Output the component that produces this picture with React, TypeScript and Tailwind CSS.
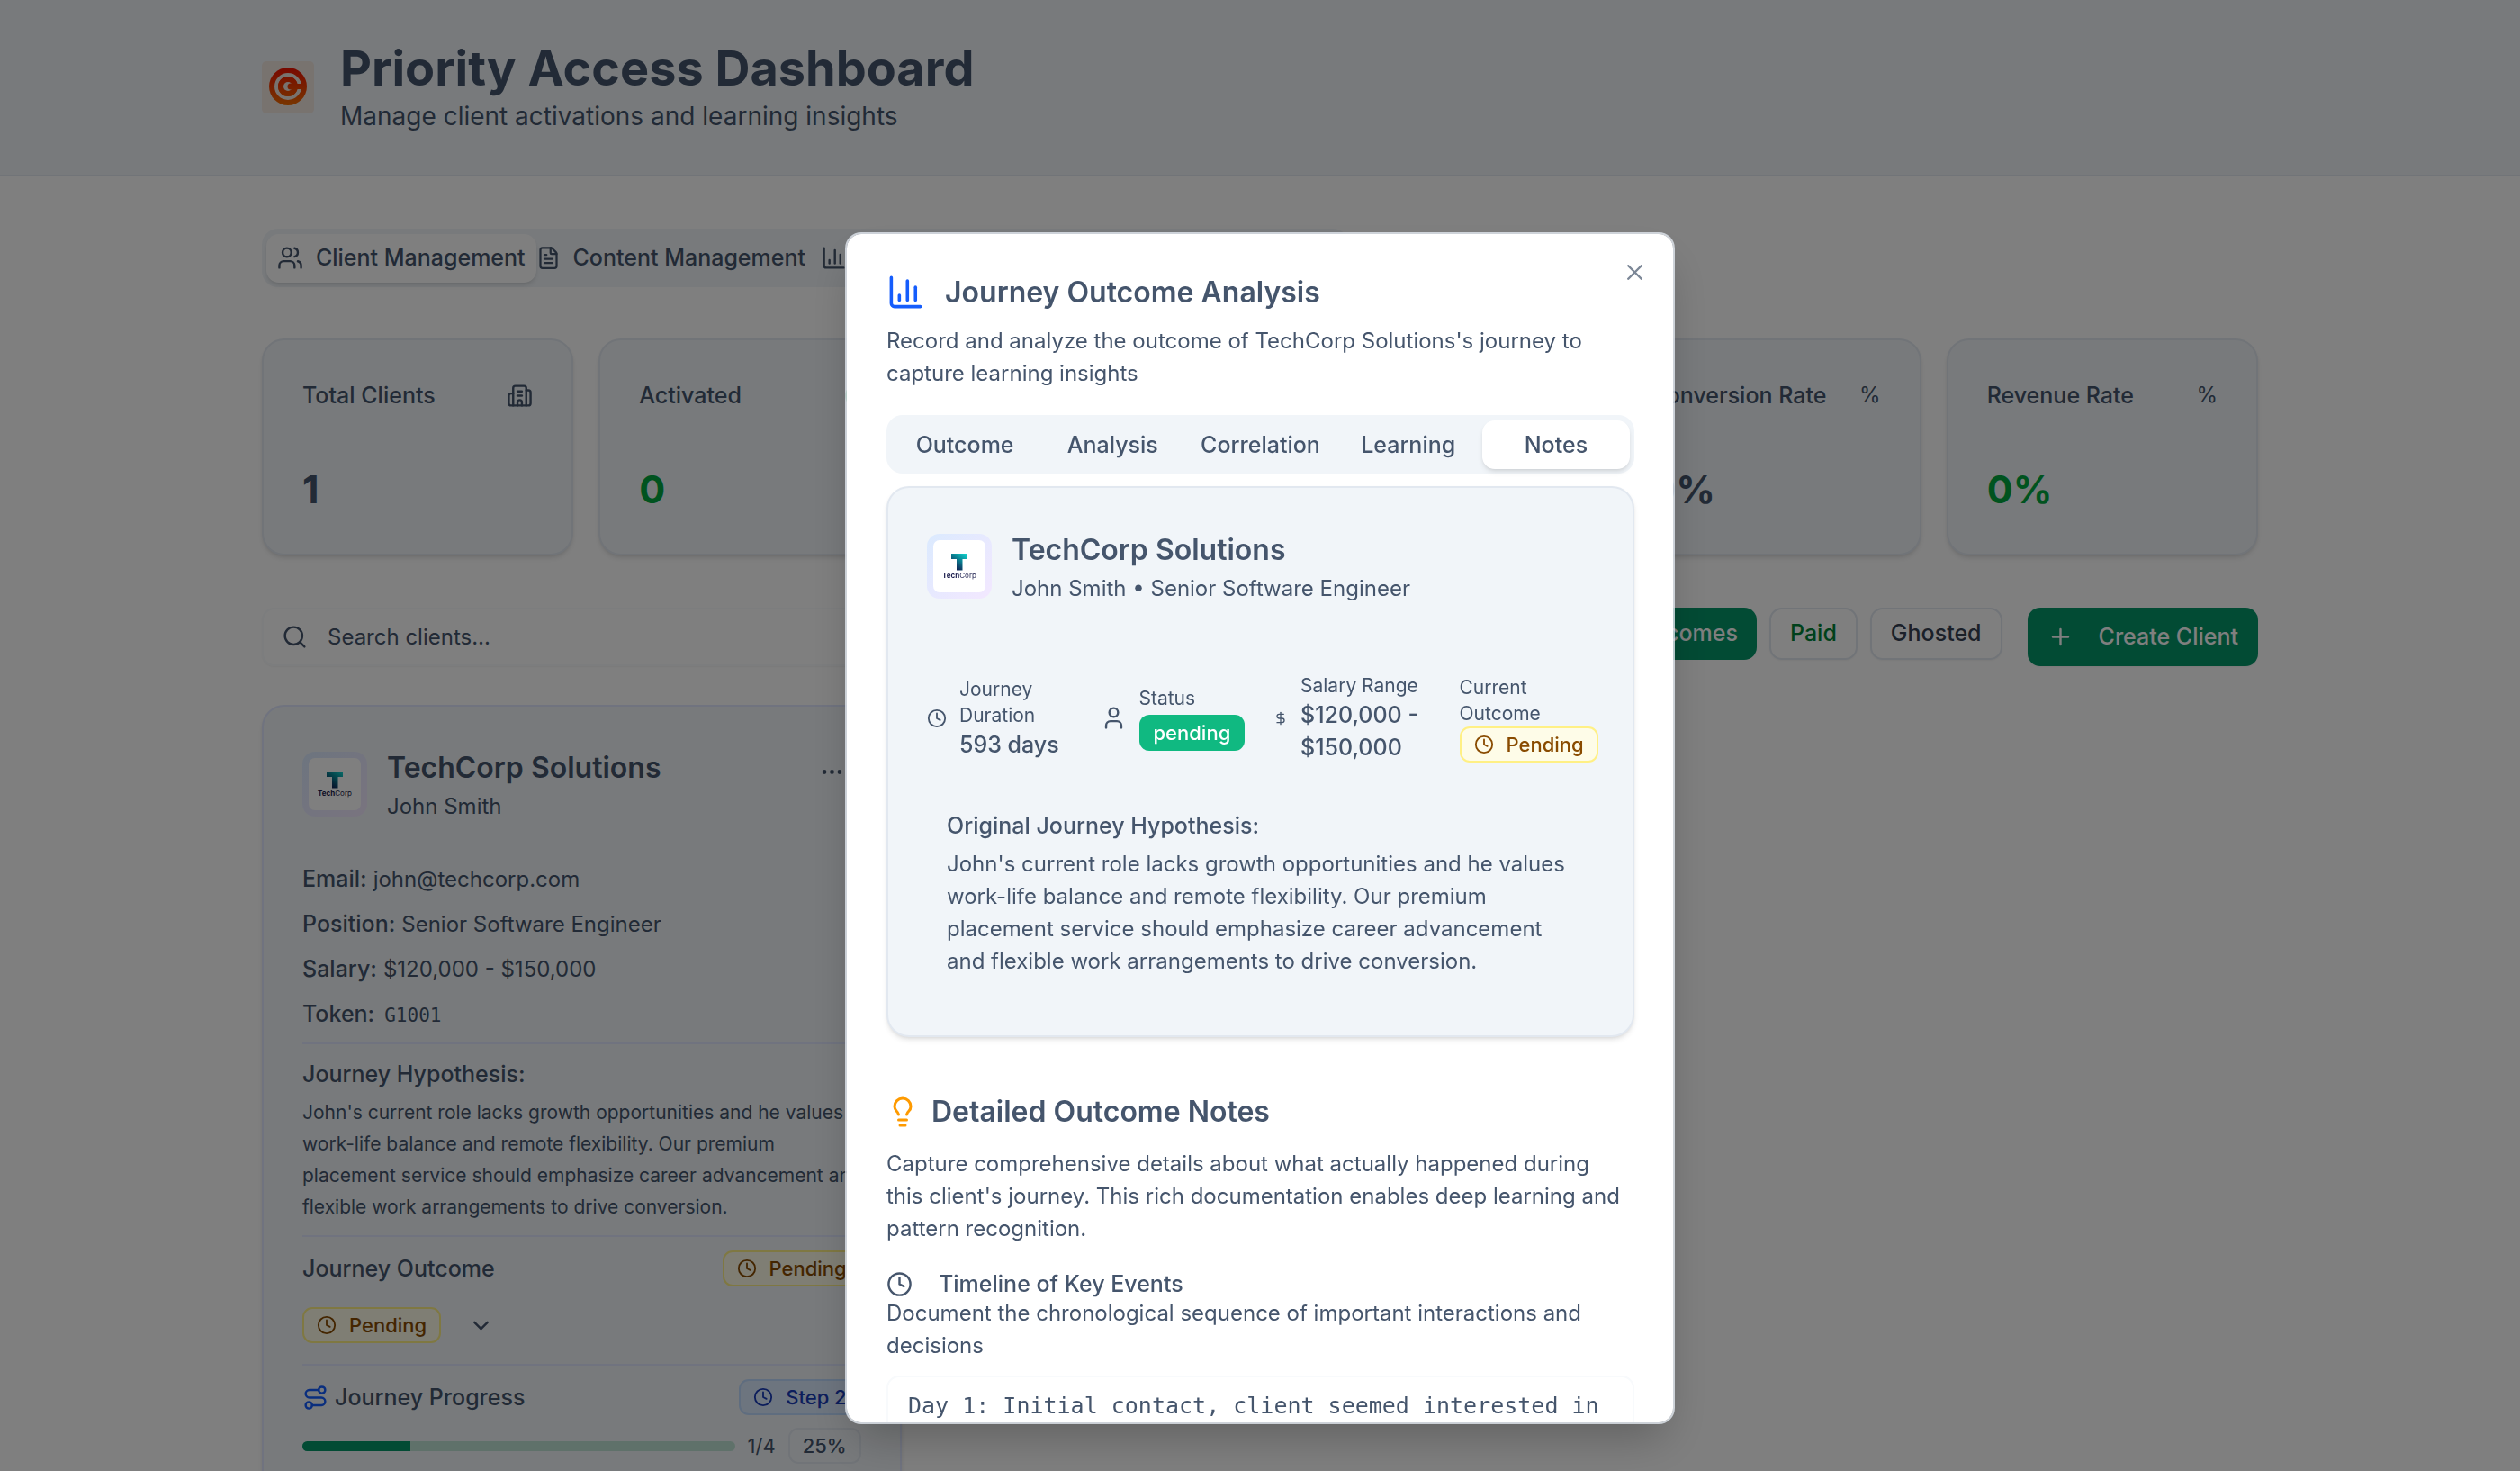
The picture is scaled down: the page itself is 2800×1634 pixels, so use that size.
import React from 'react';
import {
  Users, FileText, ChartColumn, Building2, CircleCheck, Search, Plus, Ellipsis, Clock,
  ChevronDown, Route, X, Lightbulb, User, DollarSign, Settings,
} from 'lucide-react';

const HYPOTHESIS = [
  "John's current role lacks growth opportunities and he values",
  'work-life balance and remote flexibility. Our premium',
  'placement service should emphasize career advancement and',
  'flexible work arrangements to drive conversion.',
];

function Brand() {
  return (
    <svg viewBox="0 0 58 58" className="size-[58px] shrink-0" aria-hidden="true">
      <defs>
        <linearGradient id="brand" gradientUnits="userSpaceOnUse" x1="0" y1="7" x2="0" y2="49">
          <stop offset="0" stopColor="#f01000" />
          <stop offset="1" stopColor="#f06c00" />
        </linearGradient>
      </defs>
      <rect width="58" height="58" rx="5" fill="#f1e6df" />
      <circle cx="29" cy="28" r="21" fill="url(#brand)" />
      <circle cx="29" cy="28" r="13" fill="none" stroke="#f1e6df" strokeWidth="4" />
      <rect x="39" y="22" width="5" height="12" fill="#f1e6df" />
      <circle cx="29" cy="28" r="11" fill="url(#brand)" />
      <rect x="31" y="25" width="15" height="6" fill="url(#brand)" />
      <circle cx="29" cy="28" r="5" fill="#f1e6df" />
      <circle cx="32" cy="28" r="3.500" fill="url(#brand)" />
    </svg>
  );
}

function CompanyLogo() {
  return (
    <div className="flex size-[72px] shrink-0 items-center justify-center rounded-[14px] bg-linear-to-br from-blue-100 to-purple-100">
      <svg viewBox="0 0 58 58" className="size-[58px]" role="img" aria-label="TechCorp">
        <defs>
          <linearGradient id="tee" x1="1" y1="0" x2="0.3" y2="1">
            <stop offset="0" stopColor="#14dcd4" />
            <stop offset="0.45" stopColor="#0a8796" />
            <stop offset="1" stopColor="#10184e" />
          </linearGradient>
        </defs>
        <rect width="58" height="58" rx="7" fill="#fff" />
        <path d="M20 15h18v6h-5.500v12.500h-6.500v-12.500h-6z" fill="url(#tee)" />
        <text x="29" y="42" textAnchor="middle" fontSize="8" fontFamily="Inter, sans-serif" fill="#1b1d4d">
          <tspan fontWeight="700">Tech</tspan>Corp
        </text>
      </svg>
    </div>
  );
}

function Badge({ tone, children }: { tone: 'yellow' | 'blue'; children: React.ReactNode }) {
  const tones = {
    yellow: 'border-yellow-200 bg-yellow-50 text-yellow-800',
    blue: 'border-blue-200 bg-blue-100 text-blue-800',
  };
  return (
    <span className={`inline-flex h-[40px] w-fit items-center gap-[14px] rounded-[11px] border-2 px-[14px] text-[22px] font-medium whitespace-nowrap ${tones[tone]}`}>
      <Clock className="size-[22px] shrink-0" />
      {children}
    </span>
  );
}

function Stat({ label, value, icon, green }: { label: string; value: string; icon: React.ReactNode; green?: boolean }) {
  return (
    <div className="flex flex-col gap-[57px] rounded-[25px] border-2 border-slate-200 bg-slate-100 p-[43px] shadow-md">
      <div className="flex items-center justify-between text-[25px] leading-[36px] whitespace-nowrap">
        <h3 className="font-medium">{label}</h3>
        {icon}
      </div>
      <p className={`text-[43px] leading-[58px] font-bold ${green ? 'text-green-600' : ''}`}>{value}</p>
    </div>
  );
}

function Field({ label, children }: { label: string; children: React.ReactNode }) {
  return (
    <p className="flex h-[36px] items-baseline gap-[7px] text-[24px]">
      <span className="text-[25px] font-medium">{label}</span>
      {children}
    </p>
  );
}

function Dashboard() {
  return (
    <div>
      <header className="border-b-2 border-slate-200 bg-slate-100 py-[43px]">
        <div className="mx-auto flex max-w-[2304px] items-center gap-[29px] px-[43px]">
          <Brand />
          <div>
            <h1 className="text-[54px] leading-[65px] font-bold">Priority Access Dashboard</h1>
            <p className="text-[28px] leading-[43px]">Manage client activations and learning insights</p>
          </div>
        </div>
      </header>
      <main className="mx-auto max-w-[2304px] px-[43px] pt-[58px]">
        <nav className="grid h-[65px] w-[1208px] grid-cols-4 items-center rounded-[18px] bg-slate-100 p-[5px] text-[25px] font-medium whitespace-nowrap">
          <button className="flex h-[54px] items-center justify-center gap-[14px] rounded-[14px] bg-white shadow-md"><Users className="size-[29px]" />Client Management</button>
          <button className="flex items-center justify-center gap-[14px]"><FileText className="size-[29px]" />Content Management</button>
          <button className="flex items-center justify-center gap-[14px]"><ChartColumn className="size-[29px]" />Learning Analytics</button>
          <button className="flex items-center justify-center gap-[14px]"><Settings className="size-[29px]" />Settings</button>
        </nav>

        <section className="mt-[57px] grid grid-cols-6 gap-[28px]">
          <Stat label="Total Clients" value="1" icon={<Building2 className="size-[29px]" />} />
          <Stat label="Activated" value="0" green icon={<CircleCheck className="size-[29px] text-green-600" />} />
          <Stat label="Pending" value="1" icon={<Clock className="size-[29px]" />} />
          <Stat label="Paid" value="0" icon={<DollarSign className="size-[29px]" />} />
          <Stat label="Conversion Rate" value="0%" icon={<span className="text-[24px]">%</span>} />
          <Stat label="Revenue Rate" value="0%" green icon={<span className="text-[24px]">%</span>} />
        </section>

        <section className="mt-[58px] flex items-start gap-[28px] text-[25px]">
          <div className="flex h-[65px] flex-1 items-center gap-[22px] rounded-[14px] border-2 border-slate-50 px-[20px] shadow-xs">
            <Search className="size-[29px] shrink-0" />
            <input aria-label="Search clients" className="w-full bg-transparent text-[24px] outline-none placeholder:text-slate-600 placeholder:opacity-100" placeholder="Search clients..." />
          </div>
          <div className="flex gap-[14px] font-medium text-gray-700">
            <button className="h-[58px] rounded-[14px] bg-[#059669] px-[21px] text-white">All Outcomes</button>
            <button className="h-[58px] rounded-[14px] border-2 border-slate-200 px-[21px] text-green-700 shadow-xs">Paid</button>
            <button className="h-[58px] rounded-[14px] border-2 border-slate-200 px-[21px] shadow-xs">Ghosted</button>
          </div>
          <button className="flex h-[65px] items-center gap-[28px] rounded-[14px] bg-[#059669] px-[22px] font-medium text-white shadow-xs">
            <Plus className="size-[29px]" />Create Client
          </button>
        </section>

        <section className="mt-[43px] grid grid-cols-3 gap-[43px]">
          <article className="rounded-[25px] border-2 border-indigo-100 bg-slate-100 p-[43px] text-[25px] leading-[36px] shadow-md">
            <div className="flex items-start justify-between">
              <div className="flex items-center gap-[22px]">
                <CompanyLogo />
                <div>
                  <h2 className="text-[32px] leading-[50px] font-semibold">TechCorp Solutions</h2>
                  <p className="text-[24px]">John Smith</p>
                </div>
              </div>
              <button aria-label="More actions" className="flex h-[58px] items-center px-[18px]"><Ellipsis className="size-[29px]" /></button>
            </div>
            <div className="mt-[44px] flex flex-col gap-[14px]">
              <Field label="Email:">john@techcorp.com</Field>
              <Field label="Position:">Senior Software Engineer</Field>
              <Field label="Salary:">$120,000 - $150,000</Field>
              <Field label="Token:"><code className="px-[4px] font-['DejaVu_Sans_Mono',monospace] text-[21px]">G1001</code></Field>
              <div className="border-t-2 border-indigo-100 pt-[15px]">
                <h3 className="font-medium">Journey Hypothesis:</h3>
                <p className="mt-[7px] text-[21px] leading-[35px] whitespace-pre">{HYPOTHESIS.join('\n')}</p>
              </div>
              <div className="border-t-2 border-indigo-100 pt-[15px]">
                <div className="flex items-center justify-between">
                  <h3 className="font-medium">Journey Outcome</h3>
                  <Badge tone="yellow">Pending</Badge>
                </div>
                <button className="mt-[14px] flex h-[58px] items-center gap-[30px]">
                  <Badge tone="yellow">Pending</Badge>
                  <ChevronDown className="size-[29px]" />
                </button>
              </div>
              <div className="border-t-2 border-indigo-100 pt-[15px]">
                <div className="flex items-center justify-between">
                  <h3 className="flex items-center gap-[7px] font-medium"><Route className="size-[29px] text-blue-600" />Journey Progress</h3>
                  <Badge tone="blue">Step 2</Badge>
                </div>
                <div className="mt-[14px] flex items-center gap-[14px] text-[22px]">
                  <div className="h-[11px] flex-1 overflow-hidden rounded-full bg-[#bfe3d5]"><div className="h-full w-1/4 bg-[#059669]" /></div>
                  <span>1/4</span>
                  <span className="flex h-[40px] items-center rounded-[11px] border-2 border-slate-200 px-[14px] font-medium">25%</span>
                </div>
              </div>
            </div>
          </article>
        </section>
      </main>
    </div>
  );
}

function OutcomeDialog() {
  return (
    <div role="dialog" aria-modal="true" aria-labelledby="dialog-title" className="relative mt-[258px] h-[81vh] w-full max-w-[922px] overflow-hidden rounded-[18px] border-2 border-slate-200/80 bg-white bg-clip-padding pt-[43px] pr-[43px] pl-[44px] text-[24px] leading-[36px] shadow-2xl">
      <button aria-label="Close" className="absolute top-[28px] right-[28px] opacity-70"><X className="size-[29px]" /></button>
      <h2 id="dialog-title" className="flex items-center gap-[22px] text-[32px] leading-[43px] font-semibold"><ChartColumn className="size-[43px] text-blue-600" />Journey Outcome Analysis</h2>
      <p className="mt-[15px]">Record and analyze the outcome of TechCorp Solutions's journey to capture learning insights</p>
      <div role="tablist" className="mt-[28px] grid h-[65px] grid-cols-5 items-center rounded-[18px] bg-slate-100 p-[5px] text-[25px] font-medium">
        {['Outcome', 'Analysis', 'Correlation', 'Learning'].map((t) => <button role="tab" key={t}>{t}</button>)}
        <button role="tab" aria-selected="true" className="h-[54px] rounded-[14px] bg-white shadow-md">Notes</button>
      </div>

      <section className="mt-[14px] rounded-[25px] border-2 border-slate-200 bg-slate-100 px-[43px] pt-[44px] pb-[42px] shadow-md">
        <div className="flex items-center gap-[22px]">
          <CompanyLogo />
          <div>
            <h3 className="text-[32px] leading-[50px] font-semibold">TechCorp Solutions</h3>
            <p>John Smith • Senior Software Engineer</p>
          </div>
        </div>
        <div className="mt-[75px] grid grid-cols-4 items-center gap-[29px] whitespace-nowrap">
          <div className="flex items-center gap-[14px]">
            <Clock className="size-[22px] shrink-0" />
            <div><p className="text-[21px] leading-[29px]">Journey<br />Duration</p><p className="text-[25px] font-medium">593 days</p></div>
          </div>
          <div className="flex items-center gap-[14px]">
            <User className="size-[29px] shrink-0" />
            <div>
              <p className="text-[21px] leading-[29px]">Status</p>
              <span className="mt-[4px] flex h-[40px] items-center rounded-[11px] bg-[#10b981] px-[16px] text-[22px] font-medium text-white">pending</span>
            </div>
          </div>
          <div className="flex items-center gap-[14px]">
            <DollarSign className="size-[16px] shrink-0" />
            <div><p className="text-[21px] leading-[29px]">Salary Range</p><p className="text-[25px] font-medium">$120,000 -<br />$150,000</p></div>
          </div>
          <div className="flex flex-col pl-[14px]">
            <p className="text-[21px] leading-[29px]">Current<br />Outcome</p>
            <Badge tone="yellow">Pending</Badge>
          </div>
        </div>
        <div className="mt-[29px] p-[22px]">
          <h4 className="text-[25px] font-medium">Original Journey Hypothesis:</h4>
          <p className="mt-[7px]">{HYPOTHESIS.join(' ')}</p>
        </div>
      </section>

      <section className="mt-[58px]">
        <h3 className="flex items-center gap-[14px] text-[32px] leading-[50px] font-semibold"><Lightbulb className="size-[36px] text-amber-500" />Detailed Outcome Notes</h3>
        <p className="mt-[15px]">Capture comprehensive details about what actually happened during<br />this client's journey. This rich documentation enables deep learning and pattern recognition.</p>
        <label htmlFor="timeline" className="mt-[29px] flex items-center gap-[29px] text-[25px] leading-[29px] font-medium"><Clock className="size-[29px]" />Timeline of Key Events</label>
        <p>Document the chronological sequence of important interactions and decisions</p>
        <textarea id="timeline" rows={6} className="mt-[15px] block w-full resize-none rounded-[14px] border-2 border-slate-50 px-[22px] py-[14px] font-['DejaVu_Sans_Mono',monospace] text-[25px] placeholder:text-slate-600" placeholder="Day 1: Initial contact, client seemed interested in remote opportunities" />
      </section>
    </div>
  );
}

export default function App() {
  return (
    <div className="h-screen overflow-hidden bg-white font-['Inter',sans-serif] text-slate-600">
      <Dashboard />
      <div className="fixed inset-0 flex items-start justify-center bg-black/50">
        <OutcomeDialog />
      </div>
    </div>
  );
}
